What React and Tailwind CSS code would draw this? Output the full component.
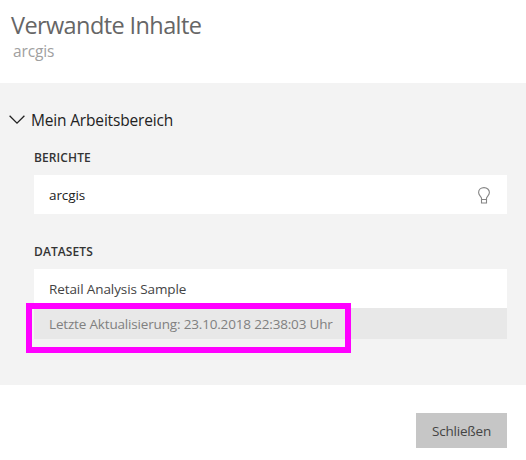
function ChevronDown() {
  return (
    <svg className="block h-[10px] w-4 shrink-0" viewBox="0 0 16 10" fill="none" stroke="#222" strokeWidth="1.3">
      <path d="M0.6 0.8 L8 8.2 L15.4 0.8" />
    </svg>
  );
}

function LightBulb() {
  return (
    <svg className="mt-px block h-[17px] w-3 shrink-0" viewBox="0 0 12 17" fill="none" stroke="#858585" strokeWidth="1.1">
      <path d="M3.5 12.5 V11.2 C3.5 9.6 0.6 8.6 0.6 5.6 C0.6 2.6 3 0.6 6 0.6 C9 0.6 11.4 2.6 11.4 5.6 C11.4 8.6 8.5 9.6 8.5 11.2 V12.5 Z" />
      <path d="M3.5 12.5 V16 H8.5 V12.5" />
    </svg>
  );
}

export default function App() {
  return (
    <div className="flex h-[460px] w-[526px] flex-col overflow-hidden bg-white font-['Open_Sans','Noto_Sans',sans-serif] whitespace-nowrap">
      <header className="h-[83px] shrink-0 pt-[9px] pl-[11px]">
        <h1 className="h-8 text-[23.5px] leading-8 tracking-[-0.6px] text-[#666]">Verwandte Inhalte</h1>
        <p className="pl-[2px] text-[15.5px] leading-5 tracking-[-0.15px] text-[#a0a0a0]">arcgis</p>
      </header>

      <main className="h-[302px] shrink-0 bg-[#f3f3f3] pt-[27px] pr-[19px] pl-[34px]">
        <div className="-ml-[25px] flex h-5 items-center gap-[6px]">
          <ChevronDown />
          <h2 className="text-[15.5px] leading-5 tracking-[-0.17px] text-[#222]">Mein Arbeitsbereich</h2>
        </div>

        <h3 className="mt-[19px] h-[18px] text-[12px] leading-[18px] font-semibold tracking-[0.1px] text-[#333]">BERICHTE</h3>
        <div className="mt-[8px] flex h-[39px] items-center justify-between bg-white pr-[17.5px] pl-[15px]">
          <span className="text-[13.5px] leading-5 tracking-[-0.1px] text-[#222]">arcgis</span>
          <LightBulb />
        </div>

        <h3 className="mt-[29px] h-[18px] text-[12px] leading-[18px] font-semibold tracking-[0.1px] text-[#333]">DATASETS</h3>
        <div className="relative mt-[8px]">
          <div className="flex h-[39px] items-center bg-white pl-[15px]">
            <span className="text-[13.5px] leading-5 tracking-[-0.1px] text-[#444]">Retail Analysis Sample</span>
          </div>
          <div className="flex h-[31px] items-center bg-[#e8e8e8] pl-[15px]">
            <span className="text-[13.5px] leading-5 tracking-[-0.17px] text-[#808080]">Letzte Aktualisierung: 23.10.2018 22:38:03 Uhr</span>
          </div>
          <div className="absolute top-[34px] -left-2 h-[50px] w-[325px] border-[6px] border-[#ff00ff]" />
        </div>
      </main>

      <footer className="flex justify-end pt-7 pr-[19px]">
        <button className="h-[35px] w-[91px] bg-[#c6c6c6] text-[13.5px] leading-5 tracking-[-0.2px] text-[#444]">Schließen</button>
      </footer>
    </div>
  );
}
